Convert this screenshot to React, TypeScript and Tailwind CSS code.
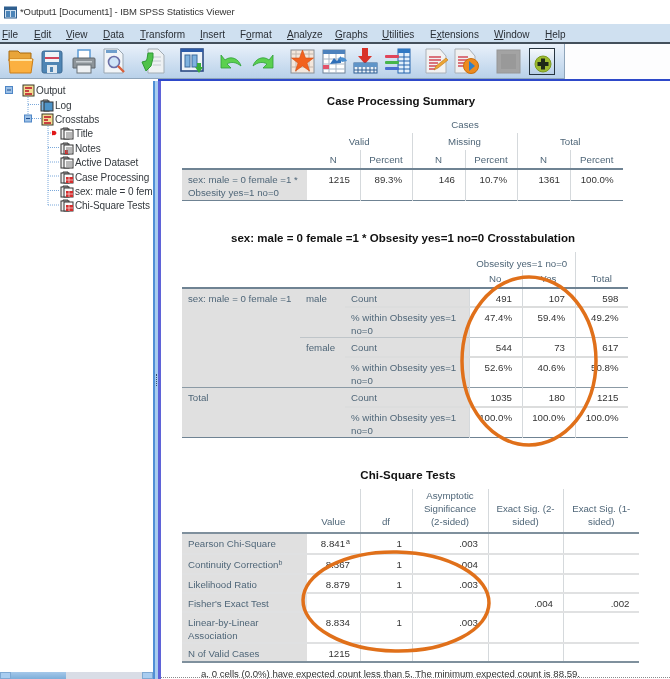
import React from "react";

const label = "text-[#4f6678]";
const font = { fontFamily: '"Liberation Sans", Arial, sans-serif' };

function Cols({ w }: { w: number[] }) {
  return (
    <colgroup>
      {w.map((x, i) => (
        <col key={i} style={{ width: x }} />
      ))}
    </colgroup>
  );
}

const Menu = ["File", "Edit", "View", "Data", "Transform", "Insert", "Format", "Analyze", "Graphs", "Utilities", "Extensions", "Window", "Help"];
const MenuU = [0, 0, 0, 0, 0, 0, 1, 0, 0, 0, 1, 0, 0];
const MenuX = [2, 34, 66, 103, 140, 200, 240, 287, 335, 382, 430, 494, 545];

function MenuBar() {
  return (
    <div className="h-[20px] pt-[2px] bg-[#cfe0f0] flex items-center border-b-2 border-[#44505c] text-[10px] text-[#2a2f36] shrink-0">
      {Menu.map((m, i) => {
        const next = i < Menu.length - 1 ? MenuX[i + 1] - MenuX[i] : 60;
        return (
          <span key={m} className="shrink-0" style={{ width: next, marginLeft: i === 0 ? 2 : 0 }}>
            {m.slice(0, MenuU[i])}
            <span className="underline">{m[MenuU[i]]}</span>
            {m.slice(MenuU[i] + 1)}
          </span>
        );
      })}
    </div>
  );
}

const Ic = ({ w = 26, g = 0, children }: { w?: number; g?: number; children: React.ReactNode }) => (
  <svg width={w} height={28} viewBox={`0 0 ${w} 28`} className="shrink-0" style={{ marginLeft: g }}>
    {children}
  </svg>
);

function Toolbar() {
  return (
    <div className="h-[35px] flex shrink-0 bg-[#fdfdfe]">
      <div className="w-[565px] h-[35px] flex items-center bg-gradient-to-b from-[#e9f1fa] to-[#b9d1e9] border-b border-r border-[#8fa5ba] pl-[8px]">
        <Ic w={26}>
          <path d="M1 4h9l2 2h11v8H1z" fill="#e8a53a" stroke="#a86a10" />
          <path d="M1 12h24l-2 14H2z" fill="#fbb040" stroke="#c87d1a" />
          <path d="M2 13h22" stroke="#ffe6a8" strokeWidth="2" />
        </Ic>
        <Ic w={22} g={7}>
          <rect x="1" y="4" width="20" height="22" rx="2" fill="#4f85b4" stroke="#3c6a94" />
          <rect x="4" y="5" width="14" height="10" fill="#eef3f8" />
          <rect x="4" y="10" width="14" height="2" fill="#d0455b" />
          <rect x="6" y="18" width="10" height="8" fill="#dfe8f0" />
          <rect x="9" y="20" width="3" height="5" fill="#4f85b4" />
        </Ic>
        <Ic w={24} g={9}>
          <rect x="6" y="3" width="12" height="9" fill="#fff" stroke="#5b9bd5" strokeWidth="1.5" />
          <path d="M2 11h20a1 1 0 0 1 1 1v9H1v-9a1 1 0 0 1 1-1z" fill="#8d9499" stroke="#5e666c" />
          <rect x="5" y="18" width="14" height="8" fill="#eef1f3" stroke="#6b7378" />
          <rect x="4" y="14" width="16" height="1.5" fill="#c8ced2" />
        </Ic>
        <Ic w={24} g={6}>
          <path d="M2 2h14l5 5v19H2z" fill="#f2f5f8" stroke="#9aa7b3" />
          <rect x="4" y="3" width="11" height="3" fill="#6f9fcc" />
          <circle cx="12" cy="15" r="5.500" fill="#cfe4f7" stroke="#6b6fa8" strokeWidth="1.6" />
          <path d="M16 19l6 6" stroke="#d9603a" strokeWidth="2.4" />
        </Ic>
        <Ic w={26} g={14}>
          <path d="M8 2h10l6 6v18H8z" fill="#eef1f3" stroke="#a3adb5" />
          <path d="M13 10h8M13 14h8M13 18h8" stroke="#c3cad0" />
          <path d="M2 15l4-1 1-2 1-6h5v5l-2 8-5 5z" fill="#4fc24a" stroke="#2f9a34" />
        </Ic>
        <Ic w={25} g={14}>
          <rect x="1" y="2" width="22" height="22" fill="#eef3f8" stroke="#2c4b84" strokeWidth="1.6" />
          <rect x="1" y="2" width="22" height="3" fill="#2c5aa8" />
          <rect x="5" y="8" width="5" height="12" fill="#7fb2df" stroke="#3c6a9c" />
          <rect x="12" y="8" width="5" height="12" fill="#7fb2df" stroke="#3c6a9c" />
          <path d="M15 20h8l-4 6z" fill="#3aae3a" />
          <rect x="17" y="16" width="4" height="5" fill="#3aae3a" />
        </Ic>
        <Ic w={22} g={15}>
          <path d="M1 8v13h10l-4-4c4-2.500 9-2 14 2-2-7-10-11-16-6z" fill="#5bd04f" stroke="#2f9f38" strokeWidth="0.8" />
        </Ic>
        <Ic w={22} g={10}>
          <path d="M21 8v13H11l4-4c-4-2.500-9-2-14 2 2-7 10-11 16-6z" fill="#5bd04f" stroke="#2f9f38" strokeWidth="0.8" />
        </Ic>
        <Ic w={25} g={16}>
          <rect x="1" y="3" width="23" height="23" fill="#f4e7dc" stroke="#8a8f96" />
          <path d="M1 7h23M1 20h23M6 3v23M19 3v23" stroke="#c2b6ad" />
          <path d="M12.500 3l3 8h8l-6.500 5 2.500 8-7-5-7 5 2.500-8L1.500 11h8z" fill="#f2621e" stroke="#d1490f" strokeWidth="0.6" />
        </Ic>
        <Ic w={26} g={7}>
          <rect x="1" y="3" width="22" height="23" fill="#fff" stroke="#6f8298" />
          <rect x="1" y="3" width="22" height="4" fill="#4d82bd" />
          <path d="M1 12h22M1 17h22M1 22h22M7 7v19M14 7v19" stroke="#a7b5c4" />
          <rect x="1" y="18" width="6" height="4" fill="#e2536a" />
          <path d="M8 17l4-6 3 3 4-5v7z" fill="#2f6fb8" />
          <path d="M16 11c4-2 8 0 9 3l-5 1z" fill="#4a8fd0" />
        </Ic>
        <Ic w={25} g={5}>
          <rect x="9" y="1" width="6" height="8" fill="#d8322a" />
          <path d="M5 9h14l-7 8z" fill="#d8322a" />
          <rect x="1" y="16" width="23" height="10" fill="#eef3f8" stroke="#2f5f94" />
          <rect x="1" y="16" width="23" height="4" fill="#5f94c8" />
          <path d="M1 23h23M5 20v6M9 20v6M13 20v6M17 20v6M21 20v6" stroke="#2f5f94" />
        </Ic>
        <Ic w={27} g={6}>
          <rect x="14" y="2" width="12" height="24" fill="#e4f0fb" stroke="#2465ad" />
          <rect x="14" y="2" width="12" height="4" fill="#2f78c4" />
          <path d="M14 10h12M14 14h12M14 18h12M14 22h12M20 6v20" stroke="#2465ad" />
          <rect x="1" y="8" width="14" height="3" rx="1" fill="#e0455a" />
          <rect x="1" y="14" width="14" height="3" rx="1" fill="#47b54c" />
          <rect x="1" y="20" width="14" height="3" rx="1" fill="#4a6fd0" />
        </Ic>
        <Ic w={23} g={14}>
          <path d="M1 2h14l6 7v17H1z" fill="#f2f2f2" stroke="#aab1b8" />
          <path d="M4 10h12M4 13h12M4 16h9M4 19h9M4 22h6" stroke="#d24a55" strokeWidth="1.6" />
          <path d="M9 23l2-4 10-8 2 2-10 8z" fill="#eda534" stroke="#b8751a" strokeWidth="0.6" />
        </Ic>
        <Ic w={26} g={6}>
          <path d="M1 2h14l6 7v17H1z" fill="#f0f0f0" stroke="#aab1b8" />
          <path d="M4 10h10M4 13h10M4 16h7M4 19h7" stroke="#d24a55" strokeWidth="1.6" />
          <circle cx="17" cy="19" r="7.500" fill="#ed8a1f" stroke="#c96f0e" />
          <path d="M15 14l6 5-6 5z" fill="#2f7fc8" />
        </Ic>
        <Ic w={25} g={16}>
          <rect x="1" y="3" width="23" height="23" fill="#a3a3a3" stroke="#969696" />
          <rect x="5" y="7" width="15" height="15" fill="#999" />
        </Ic>
        <div className="w-[26px] h-[27px] ml-[8px] border border-[#26343f] bg-gradient-to-b from-[#f6f9fc] to-[#b7cee6] flex items-end justify-end pr-[2px] pb-[1px]">
          <svg width="18" height="18" viewBox="0 0 18 18">
            <circle cx="9" cy="9" r="8" fill="#9dbb2f" stroke="#7c9a20" />
            <path d="M7 3.500h4V7h3.500v4H11v3.500H7V11H3.500V7H7z" fill="#1f2a18" />
          </svg>
        </div>
      </div>
    </div>
  );
}

const Doc = ({ kind }: { kind: string }) => {
  if (kind === "e")
    return (
      <svg width="13" height="13" viewBox="0 0 13 13" className="shrink-0">
        <rect x="1" y="1" width="11" height="11" fill="#f3dd92" stroke="#3a3a2a" />
        <rect x="3" y="3" width="7" height="2" fill="#c94040" />
        <rect x="3" y="6" width="4" height="2" fill="#c94040" />
        <rect x="3" y="9" width="7" height="2" fill="#c94040" />
      </svg>
    );
  return (
    <svg width="14" height="13" viewBox="0 0 14 13" className="shrink-0">
      <path d="M3 1h5v2h-5z" fill="none" stroke="#444" />
      <rect x="1" y="2" width="8" height="10" fill={kind === "log" ? "#7fb4dc" : "#eee"} stroke="#333" />
      <rect x="4" y="3" width="9" height="9" fill={kind === "log" ? "#4d93c8" : "#fafafa"} stroke="#333" />
      {kind === "tbl" && <rect x="6" y="6" width="7" height="6" fill="#d42e2e" />}
      {kind === "tbl" && <path d="M6 9h7M9 6v6" stroke="#fff" strokeWidth="0.6" />}
      {kind === "notes" && <rect x="5" y="8" width="3" height="4" fill="#d42e2e" />}
      {(kind === "title" || kind === "doc" || kind === "notes") && <path d="M6 6h6M6 8h6M6 10h6" stroke="#777" />}
    </svg>
  );
};

const Tree: { t: string; k: string; x: number }[] = [
  { t: "Output", k: "e", x: 22 },
  { t: "Log", k: "log", x: 40 },
  { t: "Crosstabs", k: "e", x: 41 },
  { t: "Title", k: "title", x: 60 },
  { t: "Notes", k: "notes", x: 60 },
  { t: "Active Dataset", k: "doc", x: 60 },
  { t: "Case Processing", k: "tbl", x: 60 },
  { t: "sex: male = 0 fem", k: "tbl", x: 60 },
  { t: "Chi-Square Tests", k: "tbl", x: 60 },
];

function Sidebar() {
  return (
    <div className="w-[153px] shrink-0 flex flex-col relative bg-white overflow-hidden">
      <div className="pt-[2.500px] flex-1 relative">
        {Tree.map((r) => (
          <div key={r.t} className="h-[14.400px] flex items-center gap-[1px] whitespace-nowrap text-[10px] tracking-[-0.1px] text-[#33383d]" style={{ paddingLeft: r.x }}>
            <Doc kind={r.k} />
            <span>{r.t}</span>
          </div>
        ))}
        <svg className="absolute left-0 top-0" width="70" height="140" viewBox="0 0 70 140">
          <g stroke="#7aa8da" strokeDasharray="1 1" fill="none">
            <path d="M28 16V34M28 23.500H41M32 37.500H41M48 45V124M48 52H52M48 66.500H60M48 81H60M48 95H60M48 109.500H60M48 124H60" />
          </g>
          <rect x="5.500" y="5.500" width="7" height="7" fill="#9cc0e6" stroke="#4f86c6" />
          <path d="M7 9h4" stroke="#1f4f8f" />
          <rect x="24.500" y="34" width="7" height="7" fill="#9cc0e6" stroke="#4f86c6" />
          <path d="M26 37.500h4" stroke="#1f4f8f" />
          <path d="M52 49.500l5 2.500-5 2.500z" fill="#e01818" />
          <circle cx="54" cy="52" r="2.200" fill="#e01818" />
        </svg>
      </div>
      <div className="h-[7px] flex shrink-0 bg-[#d9dde6]">
        <div className="w-[11px] bg-[#a9cdf0] border border-[#7fa9d3]" />
        <div className="w-[55px] bg-gradient-to-b from-[#a5c8ea] to-[#7daed9]" />
        <div className="flex-1" />
        <div className="w-[11px] bg-[#a9cdf0] border border-[#7fa9d3]" />
      </div>
    </div>
  );
}

function Th({ children, cls = "", colSpan }: { children?: React.ReactNode; cls?: string; colSpan?: number }) {
  return (
    <th colSpan={colSpan} className={`font-normal p-0 align-bottom text-center ${label} ${cls}`}>
      {children}
    </th>
  );
}

const tableCls = "table-fixed border-collapse text-[9.700px] leading-[13px]";
const vline = "border-l border-[#d5d9dc]";
const sLabel = "bg-[#e0e0e0] text-left align-top pl-[6px] pr-0 pt-[3px] font-normal text-[#4f6678]";
const num = "text-right align-top pt-[3px] text-[#333] pr-[9.500px]";
const titleCls = "h-[24px] text-center text-[11.500px] font-bold text-[#111] leading-[24px]";

function Table1() {
  return (
    <div>
      <div className={`${titleCls} w-[438px]`}>Case Processing Summary</div>
      <table className={`${tableCls} mt-[2px]`} style={{ width: 441 }}>
        <Cols w={[125, 53, 52, 53, 52, 53, 53]} />
        <thead>
          <tr className="h-[18px]">
            <Th />
            <Th colSpan={6} cls="!align-middle">Cases</Th>
          </tr>
          <tr className="h-[17px]">
            <Th />
            <Th colSpan={2} cls="!align-middle">Valid</Th>
            <Th colSpan={2} cls={`!align-middle ${vline}`}>Missing</Th>
            <Th colSpan={2} cls={`!align-middle ${vline}`}>Total</Th>
          </tr>
          <tr className="h-[19px] border-b-2 border-[#6f8393]">
            <Th />
            <Th cls="!align-middle">N</Th>
            <Th cls={`!align-middle ${vline}`}>Percent</Th>
            <Th cls={`!align-middle ${vline}`}>N</Th>
            <Th cls={`!align-middle ${vline}`}>Percent</Th>
            <Th cls={`!align-middle ${vline}`}>N</Th>
            <Th cls={`!align-middle ${vline}`}>Percent</Th>
          </tr>
        </thead>
        <tbody>
          <tr className="h-[31px] border-b border-[#6f8393]">
            <td className={sLabel}>sex: male = 0 female =1 * Obsesity yes=1 no=0</td>
            <td className={num}>1215</td>
            <td className={`${num} ${vline}`}>89.3%</td>
            <td className={`${num} ${vline}`}>146</td>
            <td className={`${num} ${vline}`}>10.7%</td>
            <td className={`${num} ${vline}`}>1361</td>
            <td className={`${num} ${vline}`}>100.0%</td>
          </tr>
        </tbody>
      </table>
    </div>
  );
}

function Nums({ v }: { v: string[] }) {
  return (
    <>
      {v.map((x, i) => (
        <td key={i} className={`${num} ${vline}`}>
          {x}
        </td>
      ))}
    </>
  );
}

function Table2() {
  const pct = "% within Obsesity yes=1 no=0";
  const light = "border-b-2 border-[#dcdddd]";
  return (
    <div className="mt-[25px]">
      <div className={`${titleCls} w-[442px]`}>sex: male = 0 female =1 * Obsesity yes=1 no=0 Crosstabulation</div>
      <table className={`${tableCls} mt-[2px]`} style={{ width: 446 }}>
        <Cols w={[118, 45, 124, 53, 53, 53]} />
        <thead>
          <tr className="h-[18px]">
            <Th colSpan={3} />
            <Th colSpan={2} cls="!align-bottom">Obsesity yes=1 no=0</Th>
            <Th cls={vline} />
          </tr>
          <tr className="h-[18px] border-b-2 border-[#6f8393]">
            <Th colSpan={3} />
            <Th cls="!align-middle">No</Th>
            <Th cls={`!align-middle ${vline}`}>Yes</Th>
            <Th cls={`!align-middle ${vline}`}>Total</Th>
          </tr>
        </thead>
        <tbody>
          <tr className={`h-[19px] ${light}`}>
            <td rowSpan={4} className={`${sLabel} whitespace-nowrap`}>sex: male = 0 female =1</td>
            <td rowSpan={2} className={sLabel}>male</td>
            <td className={sLabel}>Count</td>
            <Nums v={["491", "107", "598"]} />
          </tr>
          <tr className="h-[31px] border-b border-[#bfc5c9]">
            <td className={sLabel}>{pct}</td>
            <Nums v={["47.4%", "59.4%", "49.2%"]} />
          </tr>
          <tr className={`h-[19px] ${light}`}>
            <td rowSpan={2} className={sLabel}>female</td>
            <td className={sLabel}>Count</td>
            <Nums v={["544", "73", "617"]} />
          </tr>
          <tr className="h-[31px] border-b border-[#8b9aa5]">
            <td className={sLabel}>{pct}</td>
            <Nums v={["52.6%", "40.6%", "50.8%"]} />
          </tr>
          <tr className={`h-[19px] ${light}`}>
            <td colSpan={2} rowSpan={2} className={sLabel}>Total</td>
            <td className={sLabel}>Count</td>
            <Nums v={["1035", "180", "1215"]} />
          </tr>
          <tr className="h-[31px] border-b border-[#6f8393]">
            <td className={sLabel}>{pct}</td>
            <Nums v={["100.0%", "100.0%", "100.0%"]} />
          </tr>
        </tbody>
      </table>
    </div>
  );
}

const chi: [React.ReactNode, React.ReactNode, string, string, string, string, number][] = [
  ["Pearson Chi-Square", <>8.841<sup className="text-[7px] leading-none ml-[1px]">a</sup></>, "1", ".003", "", "", 21],
  [<>Continuity Correction<sup className="text-[7px] leading-none">b</sup></>, "8.367", "1", ".004", "", "", 20],
  ["Likelihood Ratio", "8.879", "1", ".003", "", "", 19],
  ["Fisher's Exact Test", "", "", "", ".004", ".002", 19],
  ["Linear-by-Linear Association", "8.834", "1", ".003", "", "", 31],
  ["N of Valid Cases", "1215", "", "", "", "", 19],
];

function Table3() {
  return (
    <div className="mt-[25px]">
      <div className={`${titleCls} w-[452px] tracking-[0.1px]`}>Chi-Square Tests</div>
      <table className={`${tableCls} mt-[2px]`} style={{ width: 457 }}>
        <Cols w={[125, 53, 52, 76, 75, 76]} />
        <thead>
          <tr className="h-[43px] border-b-2 border-[#7f909d]">
            <Th />
            <Th cls="pb-[4px]">Value</Th>
            <Th cls={`pb-[4px] ${vline}`}>df</Th>
            <Th cls={`pb-[4px] ${vline}`}>Asymptotic<br />Significance<br />(2-sided)</Th>
            <Th cls={`pb-[4px] ${vline}`}>Exact Sig. (2-<br />sided)</Th>
            <Th cls={`pb-[4px] ${vline}`}>Exact Sig. (1-<br />sided)</Th>
          </tr>
        </thead>
        <tbody>
          {chi.map((r, i) => (
            <tr key={i} style={{ height: r[6] }} className={i === 5 ? "border-b-2 border-[#7f909d]" : "border-b-2 border-[#e0e1e2]"}>
              <td className={sLabel}>{r[0]}</td>
              <td className={num}>{r[1]}</td>
              <td className={`${num} ${vline}`}>{r[2]}</td>
              <td className={`${num} ${vline}`}>{r[3]}</td>
              <td className={`${num} ${vline}`}>{r[4]}</td>
              <td className={`${num} ${vline}`}>{r[5]}</td>
            </tr>
          ))}
        </tbody>
      </table>
      <div className="pl-[19px] text-[9.600px] leading-[13px] text-[#333] mt-[4px] whitespace-nowrap">
        a. 0 cells (0.0%) have expected count less than 5. The minimum expected count is 88.59.
      </div>
    </div>
  );
}

export default function App() {
  return (
    <div className="w-[670px] h-[679px] bg-white flex flex-col overflow-hidden relative blur-[0.3px]" style={font}>
      <div className="h-[24px] flex items-center pl-[4px] gap-[3px] shrink-0 text-[9.500px] tracking-[-0.1px] text-[#333] bg-white">
        <svg width="13" height="13" viewBox="0 0 13 13">
          <rect x="0.500" y="1" width="12" height="11" fill="#cfe0f0" stroke="#2f5f8f" />
          <rect x="0.500" y="1" width="12" height="3" fill="#2f5f8f" />
          <rect x="2" y="5" width="4" height="6" fill="#4d85b8" />
          <rect x="7" y="5" width="4" height="6" fill="#4d85b8" />
        </svg>
        <span>*Output1 [Document1] - IBM SPSS Statistics Viewer</span>
      </div>
      <MenuBar />
      <Toolbar />
      <div className="h-[2px] bg-[#2e49c9] ml-[158px] shrink-0" />
      <div className="flex flex-1 min-h-0">
        <Sidebar />
        <div className="w-[5px] shrink-0 bg-[#a8cdf0] border-l-2 border-[#4f8fd6] flex items-center justify-center">
          <div className="w-[2px] h-[12px] border-l border-dotted border-[#35506e]" />
        </div>
        <div className="w-[3px] shrink-0 bg-[#5f63d8]" />
        <div className="flex-1 min-w-0 relative pl-[21px] pt-[8px] overflow-hidden text-[#333]">
          <Table1 />
          <Table2 />
          <Table3 />
          <div className="absolute left-0 right-0 bottom-[1px] border-b border-dotted border-[#8a8a8a]" />
        </div>
      </div>
      <svg className="absolute inset-0 pointer-events-none" width="670" height="679" viewBox="0 0 670 679">
        <ellipse cx="529" cy="361" rx="67" ry="84" fill="none" stroke="#e0701a" strokeWidth="3.500" />
        <ellipse cx="396" cy="601.500" rx="93" ry="49.500" fill="none" stroke="#e0701a" strokeWidth="3.500" transform="rotate(1 396 601.500)" />
      </svg>
    </div>
  );
}
